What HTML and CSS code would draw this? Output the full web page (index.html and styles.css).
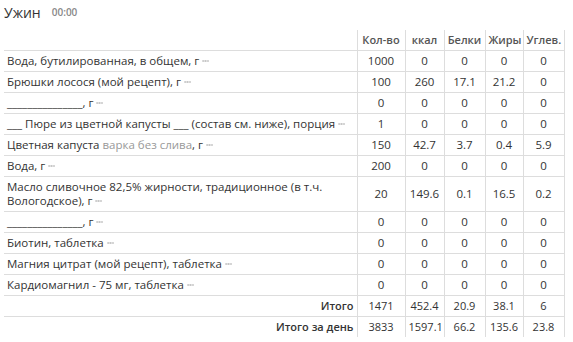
FILE: index.html
```html
<!DOCTYPE html>
<html lang="ru">
<head>
<meta charset="utf-8">
<link rel="stylesheet" href="styles.css">
</head>
<body>
<div class="meal">
  <div class="meal-title"><span class="meal-name">Ужин</span><span class="meal-time">00:00</span></div>
  <table class="food">
    <colgroup>
      <col class="c-name"><col class="c-qty"><col class="c-kcal"><col class="c-p"><col class="c-f"><col class="c-c">
    </colgroup>
    <thead>
      <tr><th class="name"></th><th>Кол-во</th><th>ккал</th><th>Белки</th><th>Жиры</th><th>Углев.</th></tr>
    </thead>
    <tbody>
      <tr><td class="name">Вода, бутилированная, в общем, г<span class="more"></span></td><td>1000</td><td>0</td><td>0</td><td>0</td><td>0</td></tr>
      <tr><td class="name">Брюшки лосося (мой рецепт), г<span class="more"></span></td><td>100</td><td>260</td><td>17.1</td><td>21.2</td><td>0</td></tr>
      <tr><td class="name">_______________, г<span class="more"></span></td><td>0</td><td>0</td><td>0</td><td>0</td><td>0</td></tr>
      <tr><td class="name">___ Пюре из цветной капусты ___ (состав см. ниже), порция<span class="more"></span></td><td>1</td><td>0</td><td>0</td><td>0</td><td>0</td></tr>
      <tr><td class="name">Цветная капуста <span class="note">варка без слива</span>, г<span class="more"></span></td><td>150</td><td>42.7</td><td>3.7</td><td>0.4</td><td>5.9</td></tr>
      <tr><td class="name">Вода, г<span class="more"></span></td><td>200</td><td>0</td><td>0</td><td>0</td><td>0</td></tr>
      <tr><td class="name">Масло сливочное 82,5% жирности, традиционное (в т.ч. Вологодское), г<span class="more"></span></td><td>20</td><td>149.6</td><td>0.1</td><td>16.5</td><td>0.2</td></tr>
      <tr><td class="name">_______________, г<span class="more"></span></td><td>0</td><td>0</td><td>0</td><td>0</td><td>0</td></tr>
      <tr><td class="name">Биотин, таблетка<span class="more"></span></td><td>0</td><td>0</td><td>0</td><td>0</td><td>0</td></tr>
      <tr><td class="name">Магния цитрат (мой рецепт), таблетка<span class="more"></span></td><td>0</td><td>0</td><td>0</td><td>0</td><td>0</td></tr>
      <tr><td class="name">Кардиомагнил - 75 мг, таблетка<span class="more"></span></td><td>0</td><td>0</td><td>0</td><td>0</td><td>0</td></tr>
      <tr class="total"><td class="name">Итого</td><td>1471</td><td>452.4</td><td>20.9</td><td>38.1</td><td>6</td></tr>
      <tr class="total"><td class="name">Итого за день</td><td>3833</td><td>1597.1</td><td>66.2</td><td>135.6</td><td>23.8</td></tr>
    </tbody>
  </table>
</div>
</body>
</html>
```
FILE: styles.css
```css
html, body {
  margin: 0;
  padding: 0;
  background: #fff;
}
body {
  font-family: "Open Sans", "Noto Sans", sans-serif;
  color: #333;
}
.meal {
  padding: 2px 4px 0 4px;
}
.meal-title {
  height: 20px;
  line-height: 20px;
  margin-bottom: 8px;
  white-space: nowrap;
}
.meal-name {
  font-size: 14px;
  color: #333;
}
.meal-time {
  font-size: 10px;
  font-weight: 600;
  color: #888;
  margin-left: 11px;
  vertical-align: 2px;
}
.food {
  border-collapse: collapse;
  table-layout: fixed;
  width: 560px;
  font-size: 11.5px;
  line-height: 14px;
}
.c-name { width: 353px; }
.c-qty { width: 48px; }
.c-kcal { width: 39px; }
.c-p { width: 41px; }
.c-f { width: 38px; }
.c-c { width: 41px; }
.food th, .food td {
  padding: 3px 3px;
  height: 14px;
  text-align: center;
  border-left: 1px solid #ddd;
  border-right: 1px solid #ddd;
}
.food th {
  font-size: 11px;
  font-weight: 600;
  color: #555;
  border-bottom: 1px solid #ddd;
  white-space: nowrap;
}
.food td {
  border-top: 1px solid #ddd;
}
.food .name {
  text-align: left;
  border-left: none;
}
.more {
  display: inline-block;
  width: 7px;
  height: 2px;
  margin-left: 3px;
  vertical-align: 3px;
  background-image: radial-gradient(circle, #c4c4c4 0.8px, transparent 1.1px);
  background-size: 2.4px 2px;
}
.note {
  color: #999;
}
.total td {
  font-size: 11px;
}
.total .name {
  text-align: right;
  font-weight: 600;
}
```
